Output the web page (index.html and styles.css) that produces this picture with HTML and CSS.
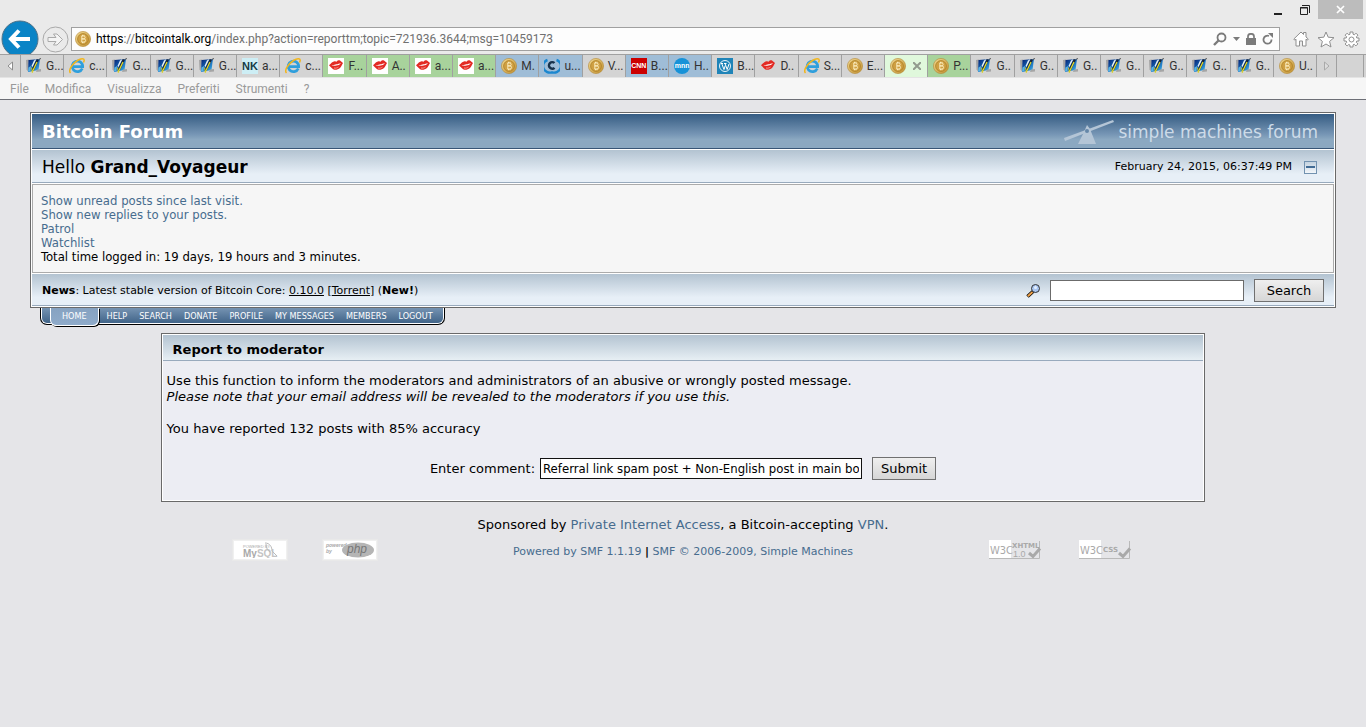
FILE: index.html
```
<!DOCTYPE html>
<html lang="en">
<head>
    <meta charset="UTF-8">
    <meta name="viewport" content="width=device-width, initial-scale=1.0">
    <title>Report to moderator</title>
    <link rel="stylesheet" href="styles.css">
</head>
<body>

<!-- shared icons -->
<svg class="sprite" aria-hidden="true">
    <defs>
        <linearGradient id="gold" x1="0" y1="0" x2="1" y2="1">
            <stop offset="0" stop-color="#f5dd96"/>
            <stop offset="1" stop-color="#bd8c2c"/>
        </linearGradient>
        <linearGradient id="sky" x1="0" y1="0" x2="1" y2="1">
            <stop offset="0" stop-color="#06206e"/>
            <stop offset=".5" stop-color="#1565b8"/>
            <stop offset="1" stop-color="#4cc3ee"/>
        </linearGradient>
    </defs>
    <symbol id="coin" viewBox="0 0 16 16">
        <circle cx="8" cy="8" r="7.6" fill="url(#gold)" stroke="#b58a35" stroke-width=".6"/>
        <circle cx="8" cy="8" r="5.4" fill="#cfa043" stroke="#a97a20" stroke-width=".7"/>
        <path d="M6.500 5h2.200a1.400 1.400 0 0 1 0 2.900H6.800h2.200a1.500 1.500 0 0 1 0 3.100H6.500M6.800 5v6M7.500 3.800V5M9 3.800V5M7.500 11v1.200M9 11v1.200" fill="none" stroke="#fdf0c4" stroke-width=".9"/>
    </symbol>
    <symbol id="guru" viewBox="0 0 16 16">
        <path d="M0 2l3-.5-1 12-1.500-2z" fill="#a5a5a5"/>
        <path d="M2.500 2L14 1l-1.500 11-10.500 2z" fill="url(#sky)"/>
        <path d="M2.500 9.500L5 8l-.5 5-2.500.8z" fill="#58b4e4"/>
        <path d="M11 11.500l4-.5v2.500l-5 .5z" fill="#a5a5a5"/>
        <path d="M8 2.500L10.500 1l-4 8-1-1z" fill="#e8f1f8"/>
        <path d="M11.800 1.500L6.500 12.500" stroke="#1c2433" stroke-width="2.200"/>
        <path d="M11 4L6 14.500" stroke="#e2dc2e" stroke-width="1.300"/>
        <path d="M5.500 9.500l1 5" stroke="#d4ca2a" stroke-width="1"/>
        <path d="M12.500 1.500l2.500-1" stroke="#555" stroke-width="1"/>
    </symbol>
    <symbol id="ie" viewBox="0 0 16 16">
        <path d="M13.300 10.400A5.300 5.300 0 1 1 13.700 8.600H4.500" fill="none" stroke="#2f9fdc" stroke-width="2.700"/>
        <path d="M1.500 15C-1 12.500 3 6 8.500 2.500 12 .5 15 .2 15.200 2c.1.800-.3 1.700-.8 2.500" fill="none" stroke="#f2b61d" stroke-width="1.500"/>
    </symbol>
    <symbol id="lips" viewBox="0 0 16 16">
        <path d="M1 7.200C3 5.500 5 3 7 3.300c.8 0 1.200.5 1.500.4C9.500 2.500 11 2 12 2.500c1 .8 2 1.700 3 2.500-1 1.500-1.500 3.500-3 5-1.500 1.300-3.500 2-5.500 1.800C4.500 11.500 3 9 1 7.200z" fill="#e32a24"/>
        <path d="M3.500 7.300c2 .3 3.500-.8 5-1 1.500-.2 2.500-.7 4.500-1.100-1.500 1.500-3 2.200-4.500 2.300-1.800.3-3.500.6-5-.2z" fill="#fff"/>
        <path d="M6 10c1.500.4 3 .1 4.500-1" stroke="#f7948d" stroke-width="1" fill="none"/>
    </symbol>
    <symbol id="cring" viewBox="0 0 16 16">
        <path d="M3.500 2A7 6.500 0 0 0 8 14.300 7 6.500 0 0 0 12.500 2" fill="none" stroke="#1b87cf" stroke-width="2.400"/>
        <path d="M10.500 5A3.300 3.300 0 1 0 10.500 9.800" fill="none" stroke="#17324b" stroke-width="2.400"/>
    </symbol>
    <symbol id="wp" viewBox="0 0 16 16">
        <path d="M0 0h16v16H0z" fill="#1f84b8"/>
        <circle cx="8" cy="8" r="5.500" fill="none" stroke="#fff" stroke-width=".9"/>
        <path d="M4 5.500h2M4.700 5.500l2.300 6L8.300 7.500M7 5.500h2.500M8 5.500l2.200 6 1.800-5.500" fill="none" stroke="#fff" stroke-width="1"/>
    </symbol>
    <symbol id="check" viewBox="0 0 14 12">
        <path d="M1 6l4 3.500L12 1.500" fill="none" stroke="#a9a9a9" stroke-width="3"/>
    </symbol>
</svg>

<div class="browser">
    <div class="titlebar">
        <button class="win-btn" aria-label="Minimize"><svg width="10" height="12"><path d="M1 9h8v2H1z" fill="#222"/></svg></button>
        <button class="win-btn" aria-label="Restore"><svg width="12" height="12" fill="none" stroke="#222"><path d="M1.500 3.500h7v7h-7z"/><path d="M1 4h8M3 1.500h7.500V9"/></svg></button>
        <button class="win-btn win-close" aria-label="Close"><svg width="9" height="9"><path d="M1 1l7 7M8 1L1 8" stroke="#fff" stroke-width="1.700"/></svg></button>
    </div>

    <div class="toolbar">
        <button class="nav-btn" aria-label="Back">
            <svg width="38" height="38" viewBox="0 0 38 38"><circle cx="19" cy="19" r="18" fill="#0a84c6" stroke="#4d7288"/><path d="M10 19h19M18 10.500L10 19l8 8.500" fill="none" stroke="#fff" stroke-width="4"/></svg>
        </button>
        <button class="nav-btn" aria-label="Forward">
            <svg width="27" height="27" viewBox="0 0 27 27"><circle cx="13.500" cy="13.500" r="12.500" fill="none" stroke="#a9a9a9"/><path d="M6 11.500h8L11.500 8h3.500l5.500 5.500L15 19h-3.500l2.500-3.500H6z" fill="#f4f4f4" stroke="#a9a9a9"/></svg>
        </button>
        <div class="address">
            <svg width="16" height="16"><use href="#coin"/></svg>
            <span class="url"><b>https</b>://<b>bitcointalk.org</b>/index.php?action=reporttm;topic=721936.3644;msg=10459173</span>
            <span class="address-tools">
                <svg width="14" height="14" fill="none" stroke="#7b7b7b"><circle cx="8.500" cy="5.500" r="4" stroke-width="1.800"/><path d="M5.500 8.500L1 13" stroke-width="2.400"/></svg>
                <svg width="7" height="4"><path d="M0 0h7L3.500 4z" fill="#7b7b7b"/></svg>
                <svg width="10" height="12"><path d="M0 5h10v7H0z" fill="#7b7b7b"/><path d="M2 5V3.500a3 2.700 0 0 1 6 0V5" fill="none" stroke="#7b7b7b" stroke-width="1.700"/></svg>
                <svg width="12" height="12"><path d="M9.500 6.500A4 4 0 1 1 7 3" fill="none" stroke="#7b7b7b" stroke-width="1.800"/><path d="M6 0h5v5z" fill="#7b7b7b"/></svg>
            </span>
        </div>
        <div class="chrome-tools">
            <svg width="16" height="16" fill="#fff" stroke="#8f8f8f"><path d="M.8 8L8 1l2.500 2.500V1.500h2.500v4.500l2.300 2-1 1.200-1.300-1V15H9.500v-5h-3v5H3V8.200l-1.200 1z"/></svg>
            <svg width="18" height="17" fill="#fff" stroke="#8f8f8f"><path d="M9 1l2.200 5.200 5.800.5-4.400 3.700 1.400 5.600L9 13l-5 3 1.400-5.600L1 6.700l5.800-.5z"/></svg>
            <svg width="17" height="17" viewBox="0 0 17 17" fill="#fff" stroke="#8f8f8f"><path d="M7 1h3v2.200l1.400.6L13 2.200 15 4.200l-1.700 1.600.5 1.200H16v3h-2.200l-.5 1.300 1.600 1.600-2 2-1.600-1.600-1.300.6V16H7v-1.900l-1.300-.6-1.600 1.500-2-2 1.600-1.600L3.200 10H1V7h2.200l.5-1.300L2.100 4.200l2-2 1.600 1.600L7 3.200z"/><circle cx="8.500" cy="8.500" r="2.500"/></svg>
        </div>
    </div>

    <div class="tabs">
        <button class="tab-arrow" aria-label="Scroll tabs left"><svg width="6" height="10"><path d="M5.500 1v8L1 5z" fill="#fff" stroke="#8c8c8c"/></svg></button>
        <div class="tab-list">
            <a href="#" class="tab"><svg><use href="#guru"/></svg><span>G...</span></a>
            <a href="#" class="tab"><svg><use href="#ie"/></svg><span>c...</span></a>
            <a href="#" class="tab"><svg><use href="#guru"/></svg><span>G...</span></a>
            <a href="#" class="tab"><svg><use href="#guru"/></svg><span>G...</span></a>
            <a href="#" class="tab"><svg><use href="#guru"/></svg><span>G...</span></a>
            <a href="#" class="tab"><i class="fav fav-nk">NK</i><span>a...</span></a>
            <a href="#" class="tab"><svg><use href="#ie"/></svg><span>c...</span></a>
            <a href="#" class="tab green"><svg class="white"><use href="#lips"/></svg><span>F...</span></a>
            <a href="#" class="tab green"><svg class="white"><use href="#lips"/></svg><span>A..</span></a>
            <a href="#" class="tab green"><svg class="white"><use href="#lips"/></svg><span>a...</span></a>
            <a href="#" class="tab green"><svg class="white"><use href="#lips"/></svg><span>a...</span></a>
            <a href="#" class="tab blue"><svg><use href="#coin"/></svg><span>M.</span></a>
            <a href="#" class="tab blue"><svg><use href="#cring"/></svg><span>u...</span></a>
            <a href="#" class="tab"><svg><use href="#coin"/></svg><span>V...</span></a>
            <a href="#" class="tab blue"><i class="fav fav-cnn">CNN</i><span>B...</span></a>
            <a href="#" class="tab blue"><i class="fav fav-mnn">mnn</i><span>H..</span></a>
            <a href="#" class="tab"><svg><use href="#wp"/></svg><span>B...</span></a>
            <a href="#" class="tab"><svg><use href="#lips"/></svg><span>D..</span></a>
            <a href="#" class="tab"><svg><use href="#ie"/></svg><span>S...</span></a>
            <a href="#" class="tab"><svg><use href="#coin"/></svg><span>E...</span></a>
            <a href="#" class="tab active"><svg><use href="#coin"/></svg><svg class="tab-close" viewBox="0 0 8 8"><path d="M0 0l8 8M8 0L0 8" stroke="#929b8e" stroke-width="2"/></svg></a>
            <a href="#" class="tab green"><svg><use href="#coin"/></svg><span>P...</span></a>
            <a href="#" class="tab"><svg><use href="#guru"/></svg><span>G..</span></a>
            <a href="#" class="tab"><svg><use href="#guru"/></svg><span>G..</span></a>
            <a href="#" class="tab"><svg><use href="#guru"/></svg><span>G..</span></a>
            <a href="#" class="tab"><svg><use href="#guru"/></svg><span>G..</span></a>
            <a href="#" class="tab"><svg><use href="#guru"/></svg><span>G..</span></a>
            <a href="#" class="tab"><svg><use href="#guru"/></svg><span>G..</span></a>
            <a href="#" class="tab"><svg><use href="#guru"/></svg><span>G..</span></a>
            <a href="#" class="tab"><svg><use href="#coin"/></svg><span>U..</span></a>
        </div>
        <button class="tab-arrow" aria-label="Scroll tabs right"><svg width="6" height="10"><path d="M.5 1v8L5 5z" fill="#ddd" stroke="#a9a9a9"/></svg></button>
        <button class="tab-new" aria-label="New tab"></button>
    </div>

    <div class="menubar">
        <span>File</span>
        <span>Modifica</span>
        <span>Visualizza</span>
        <span>Preferiti</span>
        <span>Strumenti</span>
        <span>?</span>
    </div>
</div>

<div class="page">
    <header class="forum-box">
        <div class="title-row">
            <h1>Bitcoin Forum</h1>
            <div class="smf-logo">
                <svg width="50" height="25" viewBox="0 0 50 25"><path d="M0 18L49 0l1 2L1 21z" fill="#b4c5d6"/><path d="M23 5l3 4 6 15H14l6-12z" fill="#b4c5d6"/><circle cx="23" cy="11" r="2" fill="#6587a8"/></svg>
                <span>simple machines forum</span>
            </div>
        </div>
        <div class="hello-row">
            <div class="hello">Hello <b>Grand_Voyageur</b></div>
            <div class="date">February 24, 2015, 06:37:49 PM</div>
            <button class="collapse" aria-label="Shrink or expand the header"></button>
        </div>
        <div class="user-info">
            <a href="#">Show unread posts since last visit.</a><br>
            <a href="#">Show new replies to your posts.</a><br>
            <a href="#">Patrol</a><br>
            <a href="#">Watchlist</a><br>
            Total time logged in: 19 days, 19 hours and 3 minutes.
        </div>
        <div class="news-row">
            <div class="news"><b>News</b>: Latest stable version of Bitcoin Core: <a href="#">0.10.0</a> [<a href="#">Torrent</a>] (<b>New!</b>)</div>
            <form class="search">
                <svg width="14" height="14" viewBox="0 0 14 14"><path d="M1.500 12.500L7 7.500" stroke="#000" stroke-width="3.500"/><path d="M1.800 12.200L6.500 8" stroke="#f0a24a" stroke-width="2"/><circle cx="9.500" cy="4.500" r="4" fill="#a9c6f2" stroke="#333"/><circle cx="9.500" cy="3.500" r="1.500" fill="#e5f0fd"/></svg>
                <input type="text" aria-label="Search the forum">
                <button type="button">Search</button>
            </form>
        </div>
    </header>

    <nav class="main-nav">
        <a href="#" class="current">Home</a>
        <a href="#">Help</a>
        <a href="#">Search</a>
        <a href="#">Donate</a>
        <a href="#">Profile</a>
        <a href="#">My Messages</a>
        <a href="#">Members</a>
        <a href="#">Logout</a>
    </nav>

    <main class="report">
        <h2>Report to moderator</h2>
        <div class="report-body">
            <p>Use this function to inform the moderators and administrators of an abusive or wrongly posted message.<br>
            <em>Please note that your email address will be revealed to the moderators if you use this.</em></p>
            <p>You have reported 132 posts with 85% accuracy</p>
            <form class="comment">
                <label for="comment">Enter comment:</label>
                <input type="text" id="comment" value="Referral link spam post + Non-English post in main board">
                <button type="button">Submit</button>
            </form>
        </div>
    </main>

    <footer>
        <p class="sponsor">Sponsored by <a href="#">Private Internet Access</a>, a Bitcoin-accepting <a href="#">VPN</a>.</p>
        <div class="footer-row">
            <div class="badges">
                <a href="#" class="badge" aria-label="Powered by MySQL">
                    <svg width="50" height="16"><text x="8" y="6" class="tiny">POWERED BY</text><text x="8" y="15" class="mysql">My<tspan fill="#c4c4c4">SQL</tspan></text><path d="M30 1c5 0 7 4 7 8l5 5M31 2c0 4 2 7 4 8" fill="none" stroke="#bbb"/></svg>
                </a>
                <a href="#" class="badge" aria-label="Powered by PHP">
                    <svg width="50" height="16"><text x="1" y="5" class="tiny bold">powered</text><text x="1" y="11" class="tiny bold">by</text><ellipse cx="33" cy="8" rx="16" ry="7.500" fill="#b5b5b5"/><text x="22" y="11" class="php">php</text></svg>
                </a>
            </div>
            <div class="powered"><a href="#">Powered by SMF 1.1.19</a> <b>|</b> <a href="#">SMF © 2006-2009, Simple Machines</a></div>
            <div class="badges">
                <a href="#" class="badge w3c" aria-label="Valid XHTML 1.0">
                    <svg width="54" height="20"><path d="M0 0h22v18H0z" fill="#fff"/><path d="M0 18.500h50.500V1" fill="none" stroke="#b9b9b9"/><text x="1" y="14" class="w3">W3C</text><text x="23" y="8" class="w3-kind">XHTML</text><text x="24" y="17" class="w3-num">1.0</text><use href="#check" x="39" y="7" width="14" height="12"/></svg>
                </a>
                <a href="#" class="badge w3c" aria-label="Valid CSS">
                    <svg width="54" height="20"><path d="M0 0h22v18H0z" fill="#fff"/><path d="M0 18.500h50.500V1" fill="none" stroke="#b9b9b9"/><text x="1" y="14" class="w3">W3C</text><text x="24" y="12" class="w3-kind">CSS</text><use href="#check" x="39" y="7" width="14" height="12"/></svg>
                </a>
            </div>
        </div>
    </footer>
</div>

</body>
</html>
```
FILE: styles.css
```
* {
    box-sizing: border-box;
}

body {
    margin: 0;
    background-color: #e5e5e8;
    color: #000;
    font-family: Verdana, "DejaVu Sans", sans-serif;
    font-size: 13px;
    line-height: 16px;
}

a {
    color: #476c8e;
    text-decoration: none;
}

svg {
    display: block;
    flex: none;
}

.sprite {
    position: absolute;
    width: 0;
    height: 0;
}

/* browser window */
.browser {
    background-color: #eaeaea;
    border-bottom: 1px solid #6d6f76;
    font-family: "Segoe UI", Roboto, sans-serif;
    font-size: 12px;
}

.browser button {
    border: 0;
    padding: 0;
    background: none;
}

.titlebar {
    display: flex;
    justify-content: flex-end;
    align-items: flex-start;
    height: 24px;
    padding-right: 3px;
}

.browser .win-btn {
    display: flex;
    justify-content: center;
    align-items: center;
    width: 27px;
    height: 19px;
}

.browser .win-close {
    width: 45px;
    background-color: #bcbcbc;
}

.toolbar {
    display: flex;
    align-items: center;
    height: 30px;
    padding: 0 6px 0 1px;
}

.nav-btn {
    margin-right: 3px;
}

.nav-btn + .nav-btn {
    margin-right: 2px;
}

.address {
    display: flex;
    flex: 1;
    align-items: center;
    height: 24px;
    padding: 0 5px 0 3px;
    background-color: #fdfdfd;
    border: 1px solid #a0a0a0;
}

.url {
    flex: 1;
    margin-left: 5px;
    color: #707070;
}

.url b {
    color: #000;
    font-weight: normal;
}

.address-tools {
    display: flex;
    align-items: center;
    gap: 6px;
}

.chrome-tools {
    display: flex;
    align-items: center;
    gap: 8px;
    margin-left: 13px;
}

.tabs {
    position: relative;
    display: flex;
    height: 24px;
    padding-right: 2px;
    background-color: #d4d4d4;
    border-top: 1px solid #a0a0a0;
    border-bottom: 1px solid #e4e4e4;
}

.tab-list {
    display: flex;
    flex: 1;
    min-width: 0;
}

.browser .tab-arrow {
    display: flex;
    justify-content: center;
    align-items: center;
    width: 20px;
}

.tab {
    display: flex;
    flex: 1;
    align-items: center;
    min-width: 0;
    padding-left: 5px;
    border-left: 1px solid #a0a0a0;
    color: #333;
    white-space: nowrap;
}

.tab svg,
.fav {
    width: 16px;
    height: 16px;
}

.tab span {
    margin-left: 4px;
}

.tab .white {
    background-color: #fff;
}

.tab.green {
    background-color: #a8d39c;
}

.tab.blue {
    background-color: #9fbdd7;
}

.tab.active {
    background-color: #e0f8dc;
}

.tab .tab-close {
    width: 8px;
    height: 8px;
    margin-left: 7px;
}

.fav {
    flex: none;
    color: #fff;
    font-family: "Liberation Sans", sans-serif;
    font-size: 7px;
    font-style: normal;
    font-weight: bold;
    text-align: center;
}

.fav-nk {
    background-color: #cdeef5;
    color: #173a44;
    font-size: 11px;
}

.fav-cnn {
    background-color: #cc0000;
}

.fav-mnn {
    border-radius: 8px;
    background-color: #1692d8;
}

.browser .tab-arrow:not(:first-child),
.browser .tab-new {
    border-left: 1px solid #a0a0a0;
}

.browser .tab-new {
    width: 28px;
    border-right: 1px solid #a0a0a0;
}

.menubar {
    display: flex;
    gap: 16px;
    height: 21px;
    padding: 3px 10px 2px;
    background-color: #f6f6f6;
    color: #9a9a9a;
}

/* forum */
.page {
    padding: 12px 30px;
}

.forum-box {
    padding: 1px;
    border: 1px solid #696969;
    background-color: #fff;
}

.title-row {
    display: flex;
    justify-content: space-between;
    align-items: center;
    height: 35px;
    padding: 2px 16px 0 10px;
    background: linear-gradient(#355c83, #7796b5 60%, #8ba8c1 75%);
    border-bottom: 1px solid #375576;
}

h1 {
    margin: 0;
    color: #fff;
    font-size: 18px;
}

.smf-logo {
    display: flex;
    align-items: center;
    gap: 4px;
    color: #cddbe8;
    font-size: 17px;
}

.hello-row,
.news-row {
    display: flex;
    align-items: center;
    height: 33px;
    margin-top: 1px;
    padding: 2px 17px 0 10px;
    background: linear-gradient(#b3c3d1, #e7eff7 75%);
    border-bottom: 1px solid #98aabd;
}

.hello {
    flex: 1;
    font-size: 17px;
}

.date,
.news,
.powered {
    font-size: 11px;
}

.collapse {
    display: flex;
    align-items: center;
    width: 13px;
    height: 13px;
    margin-left: 12px;
    padding: 0 1px;
    background: linear-gradient(#c4d3e0, #f2f6fa);
    border: 1px solid #7292b0;
}

.collapse::before {
    content: "";
    width: 9px;
    height: 2px;
    background-color: #426c95;
}

.user-info {
    margin-top: 1px;
    padding: 9px 8px 8px;
    background-color: #f6f6f6;
    border: 1px solid #ababab;
    font-family: Tahoma, "DejaVu Sans Condensed", sans-serif;
    line-height: 14px;
}

.news-row {
    height: 32px;
    padding-right: 10px;
}

.news {
    flex: 1;
}

.news a {
    color: #000;
    text-decoration: underline;
}

.search,
.comment {
    display: flex;
    align-items: center;
    gap: 10px;
}

input {
    height: 21px;
    padding: 0 2px;
    background-color: #fff;
    border: 1px solid #6b6b6b;
    font-family: Tahoma, "DejaVu Sans Condensed", sans-serif;
    font-size: 13px;
}

.search input {
    width: 194px;
}

.search button,
.comment button {
    height: 23px;
    padding: 0;
    background: linear-gradient(#efefef, #d6d6d6);
    border: 1px solid #707070;
    color: #000;
    font-family: Verdana, "DejaVu Sans", sans-serif;
    font-size: 13px;
}

.search button {
    width: 70px;
}

.comment button {
    width: 64px;
}

.main-nav {
    display: flex;
    width: fit-content;
    height: 17px;
    margin-left: 10px;
    padding: 0 5px 0 9px;
    background: linear-gradient(#7593b2, #3d6186);
    border: solid #000;
    border-width: 0 1px 1px;
    border-radius: 0 0 7px 7px;
    box-shadow: inset 0 -1px #fff, inset 1px 0 #fff, inset -1px 0 #fff;
}

.main-nav a {
    padding: 0 6px;
    color: #fff;
    font-family: Tahoma, "DejaVu Sans Condensed", sans-serif;
    font-size: 9px;
    text-transform: uppercase;
}

.main-nav .current {
    height: 18px;
    margin-right: 2px;
    padding: 0 11px;
    background: linear-gradient(#86a2c1, #8fabca);
    border: solid #fff;
    border-width: 0 1px 1px;
    border-radius: 0 0 6px 6px;
    box-shadow: 1px 1px #000;
}

.report {
    width: 80%;
    margin: 8px auto 0;
    padding: 1px;
    border: 1px solid #696969;
    background-color: #fff;
}

h2 {
    margin: 0;
    padding: 7px 10px 2px;
    background: linear-gradient(#b3c3d1, #e7eff4);
    border-bottom: 1px solid #98aabd;
    font-size: 13px;
}

.report-body {
    padding: 12px 4px 20px;
    background-color: #ecedf3;
}

.report-body p {
    margin: 0 0 16px;
}

.comment {
    justify-content: center;
    margin-top: 20px;
}

.comment label {
    margin-right: -5px;
}

.comment input {
    width: 322px;
    border-color: #111;
}

footer {
    padding-top: 15px;
}

.sponsor {
    margin: 0 0 7px;
    text-align: center;
}

.footer-row {
    display: flex;
    justify-content: center;
    align-items: center;
    gap: 10%;
}

.powered {
    min-width: 350px;
    padding-top: 4px;
    text-align: center;
}

.badges {
    display: flex;
    gap: 36px;
}

.badge {
    padding: 1px;
    background-color: #fff;
    border: 1px solid #f0f0f0;
    outline: 1px solid #e9e9e9;
}

.badge.w3c {
    padding: 0;
    background: none;
    border: 0;
    outline: 0;
}

.badge text {
    font-family: "Liberation Sans", sans-serif;
    fill: #a9a9a9;
}

.badge .tiny {
    font-size: 4px;
}

.badge .bold {
    font-size: 5px;
    font-weight: bold;
    font-style: italic;
}

.badge .mysql {
    font-size: 10px;
    font-weight: bold;
}

.badge .php {
    fill: #777;
    font-size: 12px;
    font-style: italic;
}

.badge .w3 {
    font-family: "Liberation Sans Narrow", "DejaVu Sans Condensed", sans-serif;
    font-size: 11px;
}

.badge .w3-kind {
    font-family: "DejaVu Sans", sans-serif;
    font-size: 7px;
    font-weight: bold;
}

.badge .w3-num {
    font-size: 9px;
}
```
